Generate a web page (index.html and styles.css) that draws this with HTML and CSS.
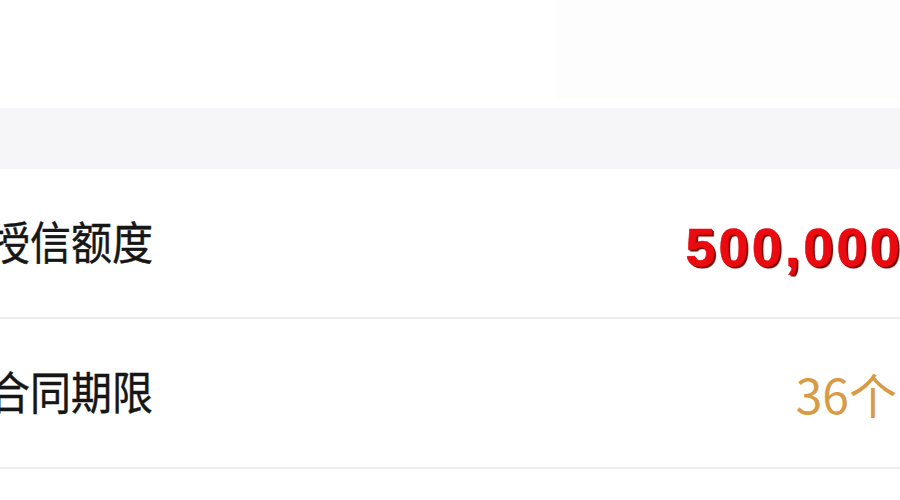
FILE: index.html
```html
<!DOCTYPE html>
<html lang="zh-CN">
<head>
<meta charset="utf-8">
<link rel="stylesheet" href="styles.css">
</head>
<body>
<div class="page">
  <div class="top">
    <div class="top-left"></div>
    <div class="top-right"></div>
  </div>
  <div class="band"></div>
  <div class="row">
    <span class="label">授信额度</span>
    <span class="amount">500,000</span>
  </div>
  <div class="row">
    <span class="label">合同期限</span>
    <span class="term">36个</span>
  </div>
</div>
</body>
</html>
```
FILE: styles.css
```css
html, body {
  margin: 0;
  padding: 0;
  background: #ffffff;
  overflow: hidden;
}
.page {
  width: 900px;
  height: 500px;
  overflow: hidden;
  display: flex;
  flex-direction: column;
}
.top {
  height: 108px;
  display: flex;
  flex-shrink: 0;
}
.top-left {
  flex: 1;
}
.top-right {
  width: 345px;
  height: 99px;
  background: #fdfdfd;
}
.band {
  height: 61px;
  flex-shrink: 0;
  background: #f6f6f8;
}
.row {
  height: 148px;
  flex-shrink: 0;
  display: flex;
  align-items: center;
  justify-content: space-between;
  border-bottom: 2px solid #ececec;
  white-space: nowrap;
}
.label {
  display: inline-block;
  margin-left: -11px;
  margin-top: -6px;
  font-family: "Noto Sans CJK SC", "Noto Sans", sans-serif;
  font-size: 41px;
  line-height: 1;
  color: #161616;
  transform: scaleY(1.1);
  -webkit-text-stroke: 0.4px #161616;
}
.amount {
  display: inline-block;
  margin-right: -3px;
  margin-top: 8px;
  font-family: "Liberation Sans", Arial, sans-serif;
  font-weight: bold;
  font-size: 54px;
  line-height: 1;
  letter-spacing: 3.2px;
  color: #ea0a10;
  -webkit-text-stroke: 0.6px #ea0a10;
  text-shadow: 1px 1px 0 #8a0a0a, 2px 2px 1px #5a0606;
}
.term {
  display: inline-block;
  margin-right: 3px;
  font-family: "Noto Sans CJK SC", "Noto Sans", sans-serif;
  font-size: 48px;
  line-height: 1;
  color: #d89b45;
}
```
